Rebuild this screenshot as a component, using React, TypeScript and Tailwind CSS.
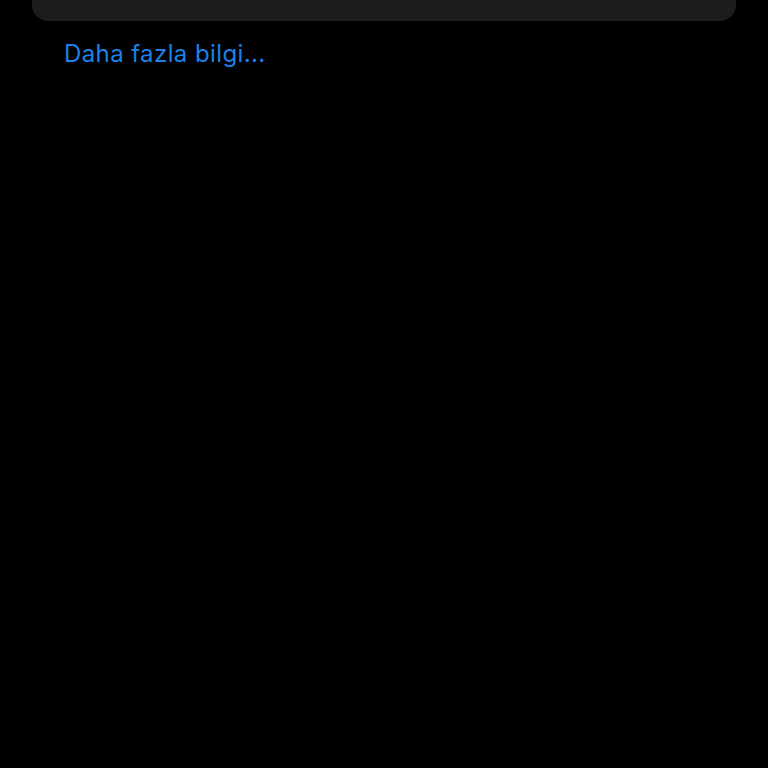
export default function App() {
  return (
    <div className="w-[768px] h-[768px] bg-black overflow-hidden" style={{ fontFamily: 'Inter, "Liberation Sans", sans-serif' }}>
      <div className="mx-8 h-[21px] bg-[#1c1c1e] rounded-b-[16px]" />
      <div className="px-16 pt-[18px]">
        <span className="text-[24px] leading-[30px] tracking-[0.4px] text-[#1a82e8]">Daha fazla bilgi...</span>
      </div>
    </div>
  );
}
